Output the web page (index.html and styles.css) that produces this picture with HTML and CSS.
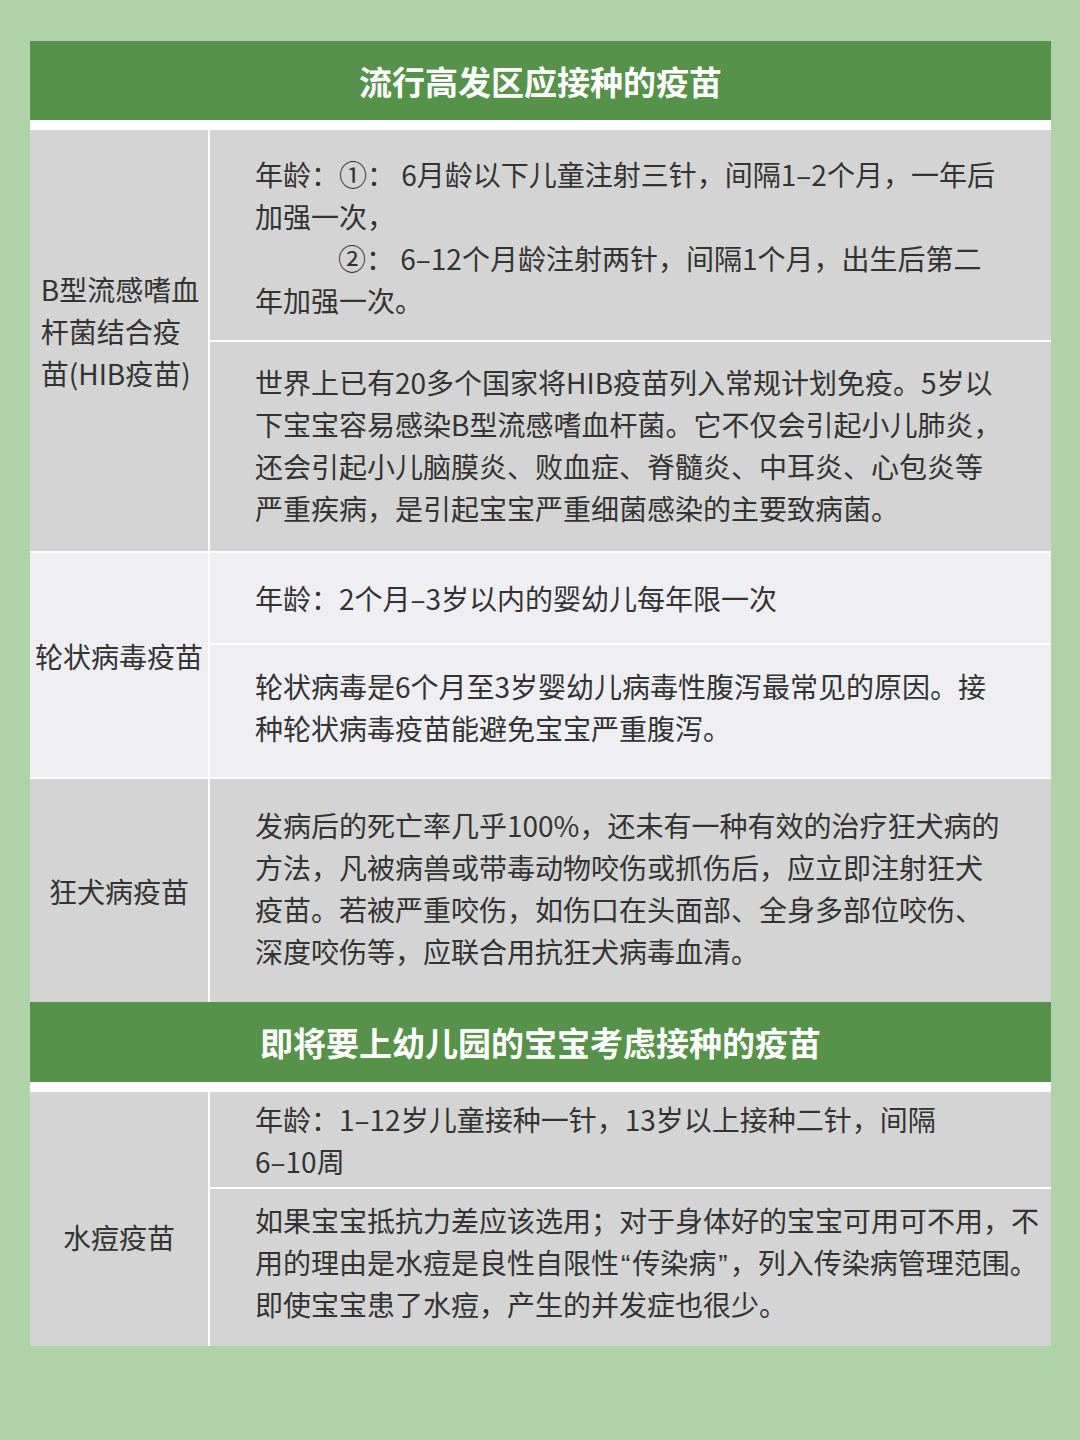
FILE: index.html
```html
<!DOCTYPE html>
<html lang="zh-CN">
<head>
<meta charset="utf-8">
<link rel="stylesheet" href="styles.css">
</head>
<body>
<div class="sheet">
  <div class="head head-first">流行高发区应接种的疫苗</div>

  <div class="row row-sep">
    <div class="label label-hib"><span class="label-block">B型流感嗜血<br>杆菌结合疫<br>苗(HIB疫苗)</span></div>
    <div class="cells">
      <div class="cell c-hib1"><span class="ln">年龄：①： 6月龄以下儿童注射三针，间隔1–2个月，一年后</span><br><span class="ln">加强一次，</span><br><span class="ln indent">②： 6–12个月龄注射两针，间隔1个月，出生后第二</span><br><span class="ln">年加强一次。</span></div>
      <div class="cell c-hib2"><span class="ln">世界上已有20多个国家将HIB疫苗列入常规计划免疫。5岁以</span><br><span class="ln">下宝宝容易感染B型流感嗜血杆菌。它不仅会引起小儿肺炎，</span><br><span class="ln">还会引起小儿脑膜炎、败血症、脊髓炎、中耳炎、心包炎等</span><br><span class="ln">严重疾病，是引起宝宝严重细菌感染的主要致病菌。</span></div>
    </div>
  </div>

  <div class="row row-sep row-light">
    <div class="label label-rota">轮状病毒疫苗</div>
    <div class="cells">
      <div class="cell c-rota1"><span class="ln">年龄：2个月–3岁以内的婴幼儿每年限一次</span></div>
      <div class="cell c-rota2"><span class="ln">轮状病毒是6个月至3岁婴幼儿病毒性腹泻最常见的原因。接</span><br><span class="ln">种轮状病毒疫苗能避免宝宝严重腹泻。</span></div>
    </div>
  </div>

  <div class="row">
    <div class="label">狂犬病疫苗</div>
    <div class="cells">
      <div class="cell c-rab"><span class="ln">发病后的死亡率几乎100%，还未有一种有效的治疗狂犬病的</span><br><span class="ln">方法，凡被病兽或带毒动物咬伤或抓伤后，应立即注射狂犬</span><br><span class="ln">疫苗。若被严重咬伤，如伤口在头面部、全身多部位咬伤、</span><br><span class="ln">深度咬伤等，应联合用抗狂犬病毒血清。</span></div>
    </div>
  </div>

  <div class="head head-second">即将要上幼儿园的宝宝考虑接种的疫苗</div>

  <div class="row">
    <div class="label label-vari">水痘疫苗</div>
    <div class="cells">
      <div class="cell c-var1"><span class="ln">年龄：1–12岁儿童接种一针，13岁以上接种二针，间隔</span><br><span class="ln">6–10周</span></div>
      <div class="cell c-var2"><span class="ln">如果宝宝抵抗力差应该选用；对于身体好的宝宝可用可不用，不</span><br><span class="ln">用的理由是水痘是良性自限性<span class="q">“</span>传染病<span class="q">”</span>，列入传染病管理范围。</span><br><span class="ln">即使宝宝患了水痘，产生的并发症也很少。</span></div>
    </div>
  </div>
</div>
</body>
</html>
```

FILE: styles.css
```css
html, body {
  margin: 0;
  padding: 0;
}
body {
  background: #afd2a9;
  width: 1080px;
  height: 1440px;
  overflow: hidden;
  font-family: "Noto Sans CJK SC", "Noto Sans", sans-serif;
  color: #333333;
}
.sheet {
  margin: 41px 0 0 30px;
  width: 1021px;
  display: flex;
  flex-direction: column;
}
.head {
  background: #57924b;
  color: #ffffff;
  font-weight: 700;
  font-size: 33px;
  display: flex;
  align-items: center;
  justify-content: center;
  border-bottom: 10px solid #ffffff;
}
.head-first {
  height: 79px;
}
.head-second {
  height: 80px;
}
.row {
  display: grid;
  grid-template-columns: 178px minmax(0, 1fr);
  column-gap: 2px;
  background: #ffffff;
}
.row-sep {
  border-bottom: 2px solid #ffffff;
}
.label {
  background: #d4d4d4;
  display: flex;
  align-items: center;
  justify-content: center;
  text-align: center;
  font-size: 28px;
  line-height: 42px;
  white-space: nowrap;
}
.label-block {
  display: inline-block;
  text-align: left;
}
.label-hib {
  padding: 0 0 20px 2px;
}
.label-rota {
  padding: 0 0 18px 0;
}
.label-vari {
  padding: 36px 0 0 0;
}
.cells {
  display: flex;
  flex-direction: column;
  row-gap: 2px;
  min-width: 0;
}
.cell {
  background: #d4d4d4;
  font-size: 28px;
  line-height: 42px;
  padding-left: 45px;
  padding-right: 4px;
  overflow: hidden;
}
.row-light .label,
.row-light .cell {
  background: #efeff3;
}
.ln {
  white-space: nowrap;
}
.q {
  font-family: "Liberation Sans", sans-serif;
  line-height: 1;
  padding: 0 2px;
}
.indent {
  margin-left: 83px;
}
.c-hib1 { padding-top: 23px; padding-bottom: 19px; }
.c-hib2 { padding-top: 19px; padding-bottom: 22px; }
.c-rota1 { padding-top: 24px; padding-bottom: 24px; }
.c-rota2 { padding-top: 20px; padding-bottom: 28px; }
.c-rab { padding-top: 25px; padding-bottom: 30px; }
.c-var1 { padding-top: 6px; padding-bottom: 5px; }
.c-var2 { padding-top: 10px; padding-bottom: 21px; }
```
